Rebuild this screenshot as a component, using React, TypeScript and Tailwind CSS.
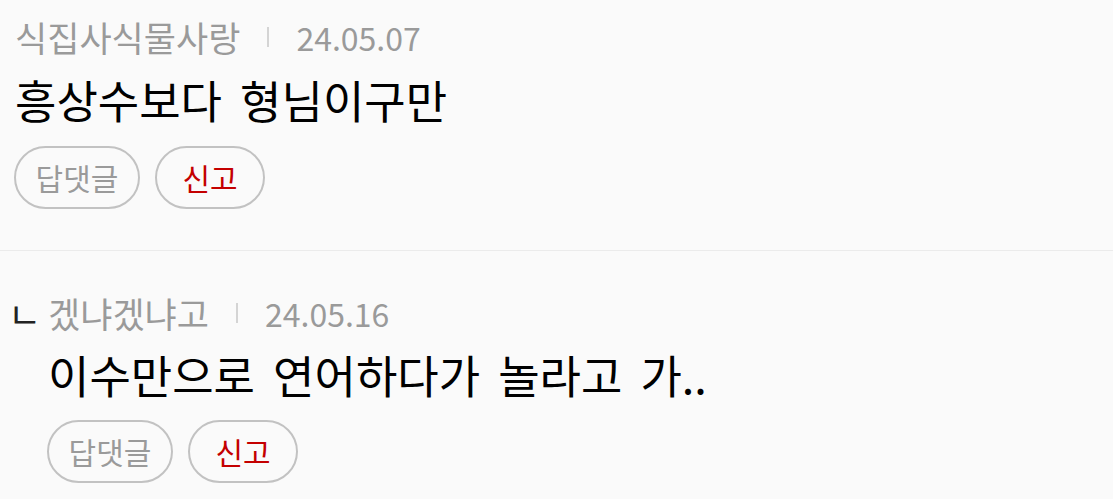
const font = { fontFamily: '"Noto Sans CJK KR", "Noto Sans", sans-serif' };

type Comment = {
  id: number;
  author: string;
  date: string;
  body: string;
  reply?: boolean;
};

const comments: Comment[] = [
  { id: 1, author: "식집사식물사랑", date: "24.05.07", body: "흥상수보다 형님이구만" },
  { id: 2, author: "겠냐겠냐고", date: "24.05.16", body: "이수만으로 연어하다가 놀라고 가..", reply: true },
];

function Actions() {
  return (
    <div className="flex gap-[15px]">
      <button className="h-[63px] w-[126px] rounded-full border-2 border-[#c2c2c2] text-[30px] text-[#9a9a9a]">
        답댓글
      </button>
      <button className="h-[63px] w-[110px] rounded-full border-2 border-[#c2c2c2] text-[30px] text-[#c40000]">
        신고
      </button>
    </div>
  );
}

export default function App() {
  return (
    <div className="h-[499px] w-[1113px] overflow-hidden bg-[#fafafa]" style={font}>
      {/* 원댓글 */}
      <div className="border-b border-[#ebebeb] pl-[14px] pt-[18px] pb-[41px]">
        <div className="flex h-[38px] items-center pl-[1px] text-[#9a9a9a]">
          <span className="text-[35px]">{comments[0].author}</span>
          <span className="mx-[27px] h-[20px] w-[2px] bg-[#d4d4d4]" />
          <span className="text-[32px]">{comments[0].date}</span>
        </div>
        <p className="mt-[18px] h-[52px] pl-[1px] text-[45px] leading-[52px] [word-spacing:8px] text-black">
          {comments[0].body}
        </p>
        <div className="mt-[20px]">
          <Actions />
        </div>
      </div>

      {/* 답글 */}
      <div className="pl-[14px] pt-[43px]">
        <div className="flex h-[38px] items-center text-[#9a9a9a]">
          <span className="-ml-[6px] w-[40px] text-[36px] leading-none text-[#222]">ㄴ</span>
          <span className="text-[35px]">{comments[1].author}</span>
          <span className="mx-[27px] h-[20px] w-[2px] bg-[#d4d4d4]" />
          <span className="text-[32px]">{comments[1].date}</span>
        </div>
        <div className="pl-[33px]">
          <p className="mt-[17px] h-[52px] pl-[1px] text-[45px] leading-[52px] [word-spacing:8px] text-black">
            {comments[1].body}
          </p>
          <div className="mt-[19px]">
            <Actions />
          </div>
        </div>
      </div>
    </div>
  );
}
